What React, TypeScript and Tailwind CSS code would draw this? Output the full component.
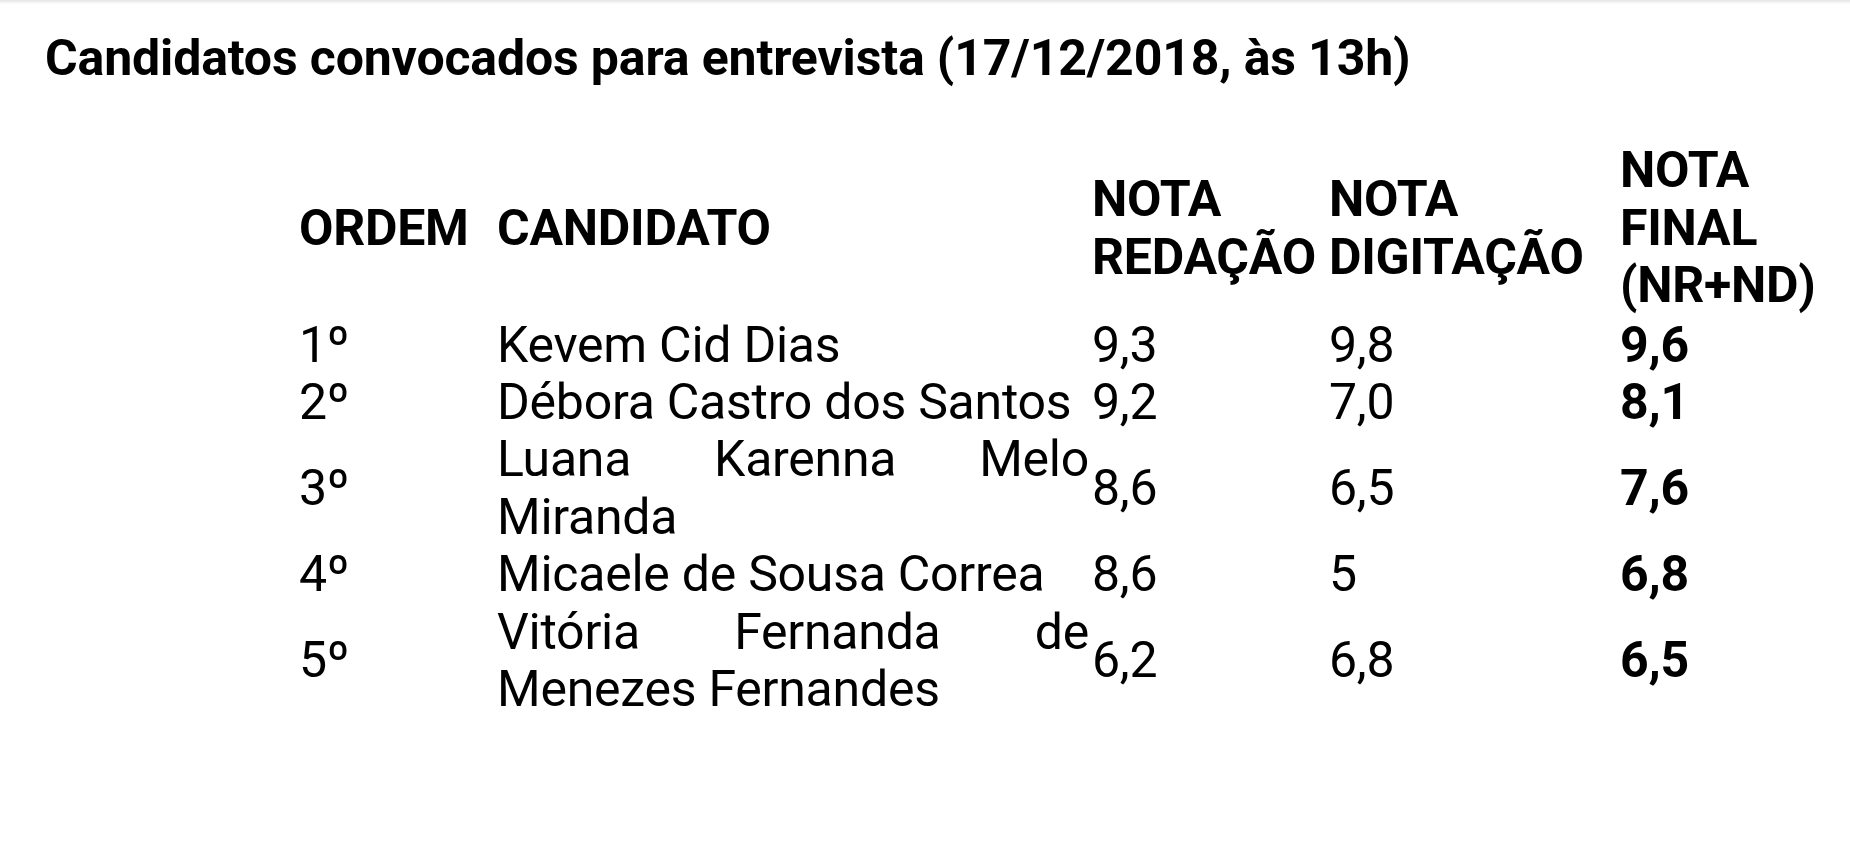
const candidatos = [
  { ordem: "1º", nome: "Kevem Cid Dias", nr: "9,3", nd: "9,8", final: "9,6" },
  { ordem: "2º", nome: "Débora Castro dos Santos", nr: "9,2", nd: "7,0", final: "8,1" },
  { ordem: "3º", nome: "Luana Karenna Melo Miranda", nr: "8,6", nd: "6,5", final: "7,6" },
  { ordem: "4º", nome: "Micaele de Sousa Correa", nr: "8,6", nd: "5", final: "6,8" },
  { ordem: "5º", nome: "Vitória Fernanda de Menezes Fernandes", nr: "6,2", nd: "6,8", final: "6,5" },
];

export default function App() {
  return (
    <div className="min-h-screen w-full bg-white text-black font-['Roboto','Liberation_Sans',sans-serif] text-[50px] leading-[57.4px] tracking-[-0.25px]">
      <div className="h-[4px] w-full bg-gradient-to-b from-[#e4e4e4] to-white" />
      <div className="pl-[45px] pt-[26px]">
        <p className="font-bold tracking-[-0.15px]">Candidatos convocados para entrevista (17/12/2018, às 13h)</p>

        <table className="mt-[55px] ml-[254px] table-fixed">
          <colgroup>
            <col className="w-[198px]" />
            <col className="w-[595px]" />
            <col className="w-[237px]" />
            <col className="w-[291px]" />
            <col className="w-[200px]" />
          </colgroup>
          <thead>
            <tr className="font-bold text-left align-middle">
              <th className="pb-[2px]">ORDEM</th>
              <th className="pb-[2px]">CANDIDATO</th>
              <th className="pb-[2px]">NOTA REDAÇÃO</th>
              <th className="pb-[2px]">NOTA DIGITAÇÃO</th>
              <th className="pb-[2px]">NOTA FINAL (NR+ND)</th>
            </tr>
          </thead>
          <tbody>
            {candidatos.map((c) => (
              <tr key={c.ordem} className="align-middle">
                <td>{c.ordem}</td>
                <td className="text-justify pr-[3px]">{c.nome}</td>
                <td>{c.nr}</td>
                <td>{c.nd}</td>
                <td className="font-bold">{c.final}</td>
              </tr>
            ))}
          </tbody>
        </table>
      </div>
    </div>
  );
}
